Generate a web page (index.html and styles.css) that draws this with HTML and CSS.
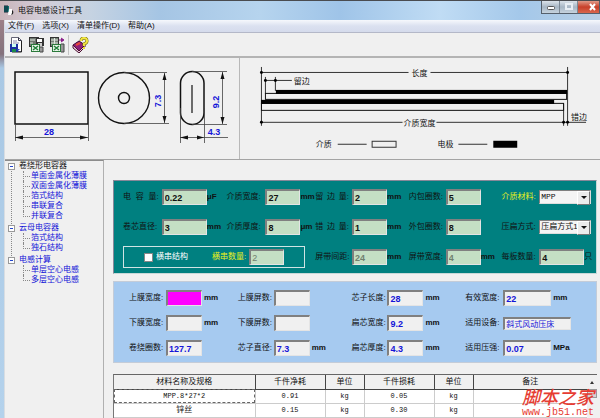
FILE: index.html
```html
<!DOCTYPE html>
<html lang="zh-CN">
<head>
<meta charset="utf-8">
<title>电容电感设计工具</title>
<link rel="stylesheet" href="styles.css">
</head>
<body>
<div class="window">
  <header class="titlebar">
    <svg class="app-icon" width="10" height="12" viewBox="0 0 10 12"><path d="M0 1h5v6H0z" fill="#0a6e6e"/><path d="M1 0v8M3 0v8" stroke="#123" stroke-width="1"/><path d="M5 4h3v6H4z" fill="#fff"/><path d="M8 5q2 1 1 4l-2 1 1-2z" fill="#222"/></svg>
    <h1>电容电感设计工具</h1>
    <div class="win-buttons">
      <button class="win-btn" type="button"><svg width="10" height="8" viewBox="0 0 10 8"><rect x="1.5" y="3.5" width="7" height="3" rx="1" fill="#fff" stroke="#555"/></svg></button>
      <button class="win-btn max" type="button"><svg width="10" height="8" viewBox="0 0 10 8"><rect x="2" y="1" width="6" height="5" fill="none" stroke="#e8eef4" stroke-width="2"/></svg></button>
      <button class="win-btn close" type="button"><svg width="10" height="8" viewBox="0 0 10 8"><path d="M2 1l5 6M7 1L2 7" stroke="#fff" stroke-width="2"/></svg></button>
    </div>
  </header>
  <div class="client">
    <nav class="menubar">
      <button type="button">文件(F)</button><button type="button">选项(X)</button><button type="button">清单操作(D)</button><button type="button">帮助(A)</button>
    </nav>
    <div class="toolbar">
      <button type="button"><svg width="14" height="16" viewBox="0 0 14 16"><path d="M2.500.5h7l3 3v11h-10z" fill="#fff" stroke="#667"/><path d="M9.500.5v3h3" fill="none" stroke="#334"/><path d="M4 4h4M4 6h6" stroke="#88a"/><path d="M12.500 4v11H3" fill="none" stroke="#222"/><rect x="1" y="7" width="8" height="8" fill="#1b2fa0"/><rect x="3" y="7" width="4" height="3" fill="#cfe"/><rect x="3" y="12" width="4" height="3" fill="#1a8a4a"/><path d="M8 12h3l-2 2z" fill="#2a50c0"/></svg></button>
      <button type="button"><svg width="15" height="16" viewBox="0 0 15 16"><rect x=".5" y=".5" width="9" height="9" fill="#707870" stroke="#333"/><rect x="7" y="1" width="8" height="8" fill="#333"/><rect x="8" y="2" width="5" height="3" fill="#fff"/><rect x="9" y="6" width="4" height="3" fill="#ccc"/><path d="M1 3h5M1 6h3" stroke="#dfe8df"/><rect x="2.500" y="7.500" width="8" height="7" fill="#e8f4e8" stroke="#2c7a3c"/><path d="M4 9l5 4M9 9l-5 4" stroke="#23803a" stroke-width="1.500"/><path d="M11 10h3v5h-3" fill="#999" stroke="#444"/></svg></button>
      <button type="button"><svg width="15" height="16" viewBox="0 0 15 16"><rect x=".5" y=".5" width="8" height="9" fill="#788278" stroke="#333"/><path d="M1 3h7M1 6h7M4.500 1v8" stroke="#dfe8df"/><path d="M9 3h4M11 1l3 2-3 2" stroke="#8a208a" fill="#8a208a"/><rect x="2.500" y="7.500" width="8" height="7" fill="#e8f4e8" stroke="#2c7a3c"/><path d="M4 9l5 4M9 9l-5 4" stroke="#23803a" stroke-width="1.500"/><path d="M11 7h3v8h-3" fill="#999" stroke="#444"/></svg></button>
      <span class="tool-sep"></span>
      <button type="button"><svg width="17" height="16" viewBox="0 0 17 16"><path d="M1 8l6-4 6 4-6 6z" fill="#8e1f78" stroke="#3a0a34"/><path d="M1 8v3l6 5 6-6V8l-6 6z" fill="#e8c8d8" stroke="#4a1030"/><path d="M4 8l4-2" stroke="#e84838" stroke-width="2"/><path d="M9 4q0-3 3-3t3 3q0 2-3 3v2" fill="none" stroke="#6a6210" stroke-width="3"/><path d="M9 4q0-3 3-3t3 3q0 2-3 3v2" fill="none" stroke="#f2e640" stroke-width="2"/><rect x="11" y="10" width="2" height="2" fill="#e8da30"/></svg></button>
    </div>

    <section class="diagrams">
      <svg class="diagram" viewBox="5 58 234 101">
        <g fill="none" stroke="#111">
          <rect x="15" y="72" width="73" height="52" stroke-width="1.500"/>
          <circle cx="124" cy="98" r="25.500" stroke-width="1.400"/>
          <circle cx="124" cy="98" r="5.500" stroke-width="1.400"/>
          <rect x="180.500" y="71.500" width="23.500" height="53" rx="11.700" stroke-width="1.500"/>
          <path d="M192 85v28" stroke-width="1.200"/>
          <path d="M15.500 124v17M88.500 124v17M15 137.500h73M124 72.500h43M124 123.500h45M164.500 73v50M192 71.500h35M192 124.500h35M222.500 72v52M180.500 108v35M204.500 108v35M180 137.500h48" stroke="#444" stroke-width=".8"/>
        </g>
        <path fill="#111" d="M15 137.500l8-2v4zM88 137.500l-8-2v4zM164.500 73l-2 7h4zM164.500 123l-2-7h4zM222.500 72l-2 7h4zM222.500 124l-2-7h4zM180 137.500l8-2v4zM204 137.500l-7-2v4z"/>
        <g class="dim">
          <text x="49" y="135">28</text>
          <text transform="translate(161 101) rotate(-90)">7.3</text>
          <text transform="translate(219 102) rotate(-90)">9.2</text>
          <text x="214" y="135">4.3</text>
        </g>
      </svg>
      <svg class="diagram" viewBox="239 58 361 101">
        <g fill="none" stroke="#333">
          <path d="M260.500 67v59M567.500 67v59M260 72.500h148M430 72.500h137M264.500 77v17M274.500 77v14M264 80.500h27M563.500 104v22M260 122.500h142M436 122.500h150M337 144.500h29M458 144.500h29"/>
          <rect x="264.500" y="93.500" width="302" height="6" stroke="#111"/>
          <rect x="260.500" y="103.500" width="303" height="7" stroke="#111"/>
          <rect x="371.500" y="141.500" width="24" height="6"/>
        </g>
        <g fill="#000">
          <rect x="275" y="90" width="292" height="4"/>
          <rect x="260" y="100" width="294" height="4"/>
          <rect x="493" y="141" width="24" height="7"/>
          <circle cx="260.500" cy="72.500" r="1.500"/><circle cx="567.500" cy="72.500" r="1.500"/>
          <circle cx="264.500" cy="80.500" r="1.500"/><circle cx="274.500" cy="80.500" r="1.500"/>
          <circle cx="260.500" cy="122.500" r="1.500"/><circle cx="563.500" cy="122.500" r="1.500"/><circle cx="567.500" cy="122.500" r="1.500"/>
        </g>
        <g class="note">
          <text x="411" y="76">长度</text>
          <text x="293" y="84">留边</text>
          <text x="403" y="126">介质宽度</text>
          <text x="571" y="120">错边</text>
          <text x="315" y="147">介质</text>
          <text x="437" y="147">电极</text>
        </g>
      </svg>
    </section>

    <div class="workspace">
      <aside class="sidebar">
        <ul class="tree">
          <li><button class="toggle" type="button"></button><a class="plain" href="#">卷绕形电容器</a>
            <ul><li><a href="#">单面金属化薄膜</a></li><li><a href="#">双面金属化薄膜</a></li><li><a href="#">箔式结构</a></li><li><a href="#">串联复合</a></li><li><a href="#">并联复合</a></li></ul></li>
          <li><button class="toggle" type="button"></button><a href="#">云母电容器</a>
            <ul><li><a href="#">箔式结构</a></li><li><a href="#">独石结构</a></li></ul></li>
          <li><button class="toggle" type="button"></button><a href="#">电感计算</a>
            <ul><li><a href="#">单层空心电感</a></li><li><a href="#">多层空心电感</a></li></ul></li>
        </ul>
      </aside>

      <main class="content">
        <form class="panel params">
          <label class="spread" for="cap"><span>电</span><span>容</span><span>量:</span></label><div class="field"><input class="wide" id="cap" value="0.22"><span>μF</span></div>
          <label for="dw">介质宽度:</label><div class="field"><input id="dw" value="27"><span>mm</span></div>
          <label class="spread" for="margin"><span>留</span><span>边</span><span>量:</span></label><div class="field"><input id="margin" value="2"><span>mm</span></div>
          <label for="inner">内包圈数:</label><div class="field"><input id="inner" value="5"></div>
          <label class="accent" for="mat">介质材料:</label><div class="field"><span class="combo"><select id="mat"><option>MPP</option></select></span></div>

          <label for="core">卷芯直径:</label><div class="field"><input class="wide" id="core" value="3"><span>mm</span></div>
          <label for="dt">介质厚度:</label><div class="field"><input id="dt" value="8"><span>μm</span></div>
          <label class="spread" for="offset"><span>错</span><span>边</span><span>量:</span></label><div class="field"><input id="offset" value="1"><span>mm</span></div>
          <label for="outer">外包圈数:</label><div class="field"><input id="outer" value="8"></div>
          <label for="press">压扁方式:</label><div class="field"><span class="combo"><select id="press"><option>压扁方式1</option></select></span></div>

          <div class="series">
            <input type="checkbox" id="series"><label class="light" for="series">横串结构</label>
            <label class="accent" for="count">横串数量:</label><input id="count" value="2" disabled>
          </div>
          <label for="gap">屏带间距:</label><div class="field"><input id="gap" value="24" disabled><span>mm</span></div>
          <label for="band">屏带宽度:</label><div class="field"><input id="band" value="4" disabled><span>mm</span></div>
          <label for="board">每板数量:</label><div class="field"><input class="wide" id="board" value="4"><span class="cjk">只</span></div>
        </form>

        <form class="panel results">
          <label for="r1">上膜宽度:</label><div class="field"><input class="magenta" id="r1"><span>mm</span></div>
          <label for="r2">上膜屏数:</label><div class="field"><input id="r2"></div>
          <label for="r3">芯子长度:</label><div class="field"><input id="r3" value="28"><span>mm</span></div>
          <label for="r4">有效宽度:</label><div class="field"><input class="wide" id="r4" value="22"><span>mm</span></div>

          <label for="r5">下膜宽度:</label><div class="field"><input id="r5"><span>mm</span></div>
          <label for="r6">下膜屏数:</label><div class="field"><input id="r6"></div>
          <label for="r7">扁芯宽度:</label><div class="field"><input id="r7" value="9.2"><span>mm</span></div>
          <label for="r8">适用设备:</label><div class="field"><input class="device" id="r8" value="斜式风动压床"></div>

          <label for="r9">卷绕圈数:</label><div class="field"><input id="r9" value="127.7"></div>
          <label for="r10">芯子直径:</label><div class="field"><input id="r10" value="7.3"><span>mm</span></div>
          <label for="r11">扁芯厚度:</label><div class="field"><input id="r11" value="4.3"><span>mm</span></div>
          <label for="r12">适用压强:</label><div class="field"><input class="wide" id="r12" value="0.07"><span>MPa</span></div>
        </form>

        <div class="grid-box">
          <table>
            <colgroup><col class="c-name"><col class="c-num"><col class="c-unit"><col class="c-num"><col class="c-unit"><col></colgroup>
            <thead><tr><th>材料名称及规格</th><th>千件净耗</th><th>单位</th><th>千件损耗</th><th>单位</th><th>备注</th></tr></thead>
            <tbody>
              <tr><td class="focus">MPP.8*27*2</td><td>0.91</td><td>kg</td><td>0.05</td><td>kg</td><td></td></tr>
              <tr><td class="name">锌丝</td><td>0.15</td><td>kg</td><td>0.30</td><td>kg</td><td></td></tr>
              <tr><td class="name">锡丝</td><td></td><td></td><td></td><td></td><td></td></tr>
            </tbody>
          </table>
          <div class="scrollbar"><span class="up"></span><span class="thumb"></span></div>
          <div class="watermark"><strong>脚本之家</strong><span>www.jb51.net</span></div>
        </div>
      </main>
    </div>
  </div>
</div>
</body>
</html>
```
FILE: styles.css
```css
* { box-sizing: border-box; }
body {
  margin: 0;
  height: 100vh;
  overflow: hidden;
  font: 8px/10px "Liberation Sans", "Noto Sans CJK SC", sans-serif;
  color: #111;
}
button, input, select { font: inherit; color: inherit; margin: 0; padding: 0; border: 0; border-radius: 0; background: none; }
a { color: #1414d8; text-decoration: none; }
h1 { margin: 0; font-size: 8px; font-weight: 400; }
svg { display: block; }

.window {
  display: flex;
  flex-direction: column;
  height: 100%;
  padding-left: 4px;
  background: linear-gradient(#b9a3a8 0, #9c8088 20px, #84727c 54px, #a9c8e4 68px, #b4d2ec 100%);
}
.titlebar {
  display: flex;
  align-items: center;
  gap: 4px;
  height: 20px;
  margin-left: -4px;
  padding-left: 4px;
  border-top: 1px solid #4a4c50;
  background: linear-gradient(90deg, #c9b4ba 0, #d3ccd6 40px, #c6d3e2 90px, #a5c5e4 160px, #b6d4ee 260px, #9fc4e8 340px, #c0dcf4 440px, #a4c8ea 520px, #b8cfe4 100%);
}
.win-buttons { display: flex; align-self: flex-start; margin-left: auto; border: 1px solid #55606c; border-top: 0; }
.win-btn { display: grid; place-items: center; width: 18px; height: 12px; background: linear-gradient(#dbe3ea, #a7b6c4 50%, #c6d3de); border-right: 1px solid #7c8894; }
.win-btn.close { width: 21px; padding-left: 8px; border: 0; background: linear-gradient(#e09a88, #c8402a 50%, #d8674c); }

.client { flex: 1; min-height: 0; display: flex; flex-direction: column; border-left: 1px solid #d8dde2; background: #f0f0f0; }
.menubar { display: flex; flex: none; gap: 8px; height: 13px; padding: 0 3px; background: linear-gradient(#f6f8fc, #dbe1f0 50%, #d5dbec); border-bottom: 1px solid #b4b8c8; }
.toolbar { display: flex; flex: none; align-items: center; gap: 6px; height: 25px; padding: 0 4px; border-bottom: 2px solid #b4b4b4; }
.tool-sep { width: 1px; height: 20px; margin: 0 -3px; background: #c4c4c4; }

.diagrams { display: grid; flex: none; grid-template-columns: 234fr 361fr; border-bottom: 1px solid #a4a4a4; }
.diagram { width: 100%; height: auto; }
.diagram + .diagram { border-left: 1px solid #b8b8b8; }
.dim { font-size: 9px; font-weight: 700; fill: #1414d8; text-anchor: middle; }
.note { font-size: 8px; fill: #111; }

.workspace { flex: 1; min-height: 0; display: grid; grid-template-columns: 99px 1fr; }
.sidebar { border-right: 1px solid #b0b0b0; border-top: 1px solid #8c8c8c; }
.tree, .tree ul { margin: 0; padding: 0; list-style: none; }
.tree { position: relative; padding-left: 14px; }
.tree > li { position: relative; }
.tree > li + li { margin-top: 2px; }
.tree > li:not(:last-child)::before { content: ""; position: absolute; left: -8px; top: 5px; bottom: -5px; border-left: 1px dotted #888; }
.tree a { display: block; line-height: 10px; white-space: nowrap; }
.tree .plain { color: #111; }
.tree ul { padding-left: 12px; }
.tree ul li { position: relative; }
.tree ul li::before { content: ""; position: absolute; left: -8px; top: 0; height: 5px; width: 6px; border-left: 1px dotted #888; border-bottom: 1px dotted #888; }
.tree ul li:not(:last-child)::after { content: ""; position: absolute; left: -8px; top: 5px; bottom: 0; border-left: 1px dotted #888; }
.toggle { position: absolute; left: -11px; top: 2px; width: 7px; height: 7px; border: 1px solid #999; background: linear-gradient(#24c, #24c) center / 3px 1px no-repeat #fff; }

.content { display: flex; flex-direction: column; gap: 7px; min-width: 0; min-height: 0; padding: 20px 3px 0 9px; }
.panel { display: grid; flex: none; align-items: center; white-space: nowrap; }
.panel > * { min-width: 0; }
.field { display: flex; align-items: center; font-size: 8px; font-weight: 700; }
.field .cjk { font-weight: 400; }
.field input, .series input { width: 35px; height: 16px; padding: 0 1px; font-size: 9px; border: 1px solid; border-color: #808080 #e4e4e4 #e4e4e4 #808080; border-left-width: 2px; border-top-width: 2px; }
.spread { display: flex; justify-content: space-between; padding-right: 3px; }

.params { grid-template-columns: 39fr 65fr 39fr 50fr 37fr 57fr 37fr 56fr 38fr 57fr; row-gap: 8px; padding: 5px 0 5px 9px; border: 1px solid #c8d8d8; border-left-color: #889; border-top-color: #889; background: #008080; }
.params > label { line-height: 22px; }
.params .field input, .series #count { background: #c4dfc4; }
.params .field .wide { width: 45px; }
.params input:disabled { color: #71806f; }
.params .accent { color: #e8f020; }
.params .light { color: #fff; }
.series { grid-column: span 4; display: flex; align-items: center; height: 22px; margin-right: 10px; padding-left: 20px; border: 1px solid #d0e4e4; }
.series .light { margin: 0 24px 0 3px; }
.series .accent { margin-right: 3px; }
.series input[type="checkbox"] { appearance: none; width: 9px; height: 9px; border: 1px solid #888; background: #fff; }
.combo { position: relative; width: 52px; font-weight: 400; }
.combo select { appearance: none; display: block; width: 100%; height: 14px; padding: 0 12px 0 1px; background: #f4f4f4; border: 1px solid #808080; border-right-color: #ddd; border-bottom-color: #ddd; }
.combo::before { content: ""; position: absolute; right: 1px; top: 1px; width: 11px; height: 12px; background: #ececec; border: 1px solid; border-color: #fff #777 #777 #fff; pointer-events: none; }
.combo::after { content: ""; position: absolute; right: 4px; top: 6px; border: 3px solid transparent; border-top-color: #111; border-bottom: 0; pointer-events: none; }
#mat { font-family: "Liberation Mono", monospace; }

.results { grid-template-columns: 37fr 72fr 36fr 78fr 36fr 78fr 38fr 93fr; row-gap: 9px; padding: 8px 0 6px 15px; border: 1px solid #c4ccd8; background: #a6caf0; }
.results .field { gap: 2px; }
.results .field input { background: #f0f0f0; color: #1414d8; width: 36px; }
.results .field .wide { width: 48px; }
.results .field .device { width: 68px; height: 13px; font-size: 8px; font-weight: 400; }
.results .field .magenta { background: #f0f; }

.grid-box { position: relative; flex: 1; min-height: 0; display: flex; align-items: flex-start; margin-top: 4px; background: #fff; border-top: 1px solid #666; border-left: 1px solid #777; overflow: hidden; }
table { flex: 1; table-layout: fixed; border-collapse: collapse; width: 100%; }
.c-name { width: 141px; }
.c-num { width: 70px; }
.c-unit { width: 39px; }
th { height: 14px; padding: 0; font-weight: 400; background: #f0f0f0; border-right: 1px solid #444; border-bottom: 1px solid #444; }
th:last-child { border-right: 0; }
td { height: 14px; padding: 0; text-align: center; font-family: "Liberation Mono", "Noto Sans CJK SC", monospace; font-size: 7px; border-right: 1px solid #ccc; border-bottom: 1px solid #ccc; }
td.name { font-size: 8px; }
td:last-child { border-right: 0; }
td.focus { outline: 1px dashed #666; outline-offset: -1px; }
.scrollbar { align-self: stretch; flex: none; width: 10px; background: #f0f0f0; }
.up { display: block; width: 0; margin: 6px auto 5px; border: 2px solid transparent; border-bottom: 3px solid #333; border-top: 0; }
.thumb { display: block; height: 9px; border: 1px solid #999; background: #d4d4d4; }
.watermark { position: absolute; right: 3px; top: 13px; display: flex; flex-direction: column; align-items: flex-end; color: #e63c32; pointer-events: none; }
.watermark strong { font-size: 18px; line-height: 20px; font-style: italic; font-weight: 500; }
.watermark span { font: 10px/10px "Liberation Mono", monospace; }
```
